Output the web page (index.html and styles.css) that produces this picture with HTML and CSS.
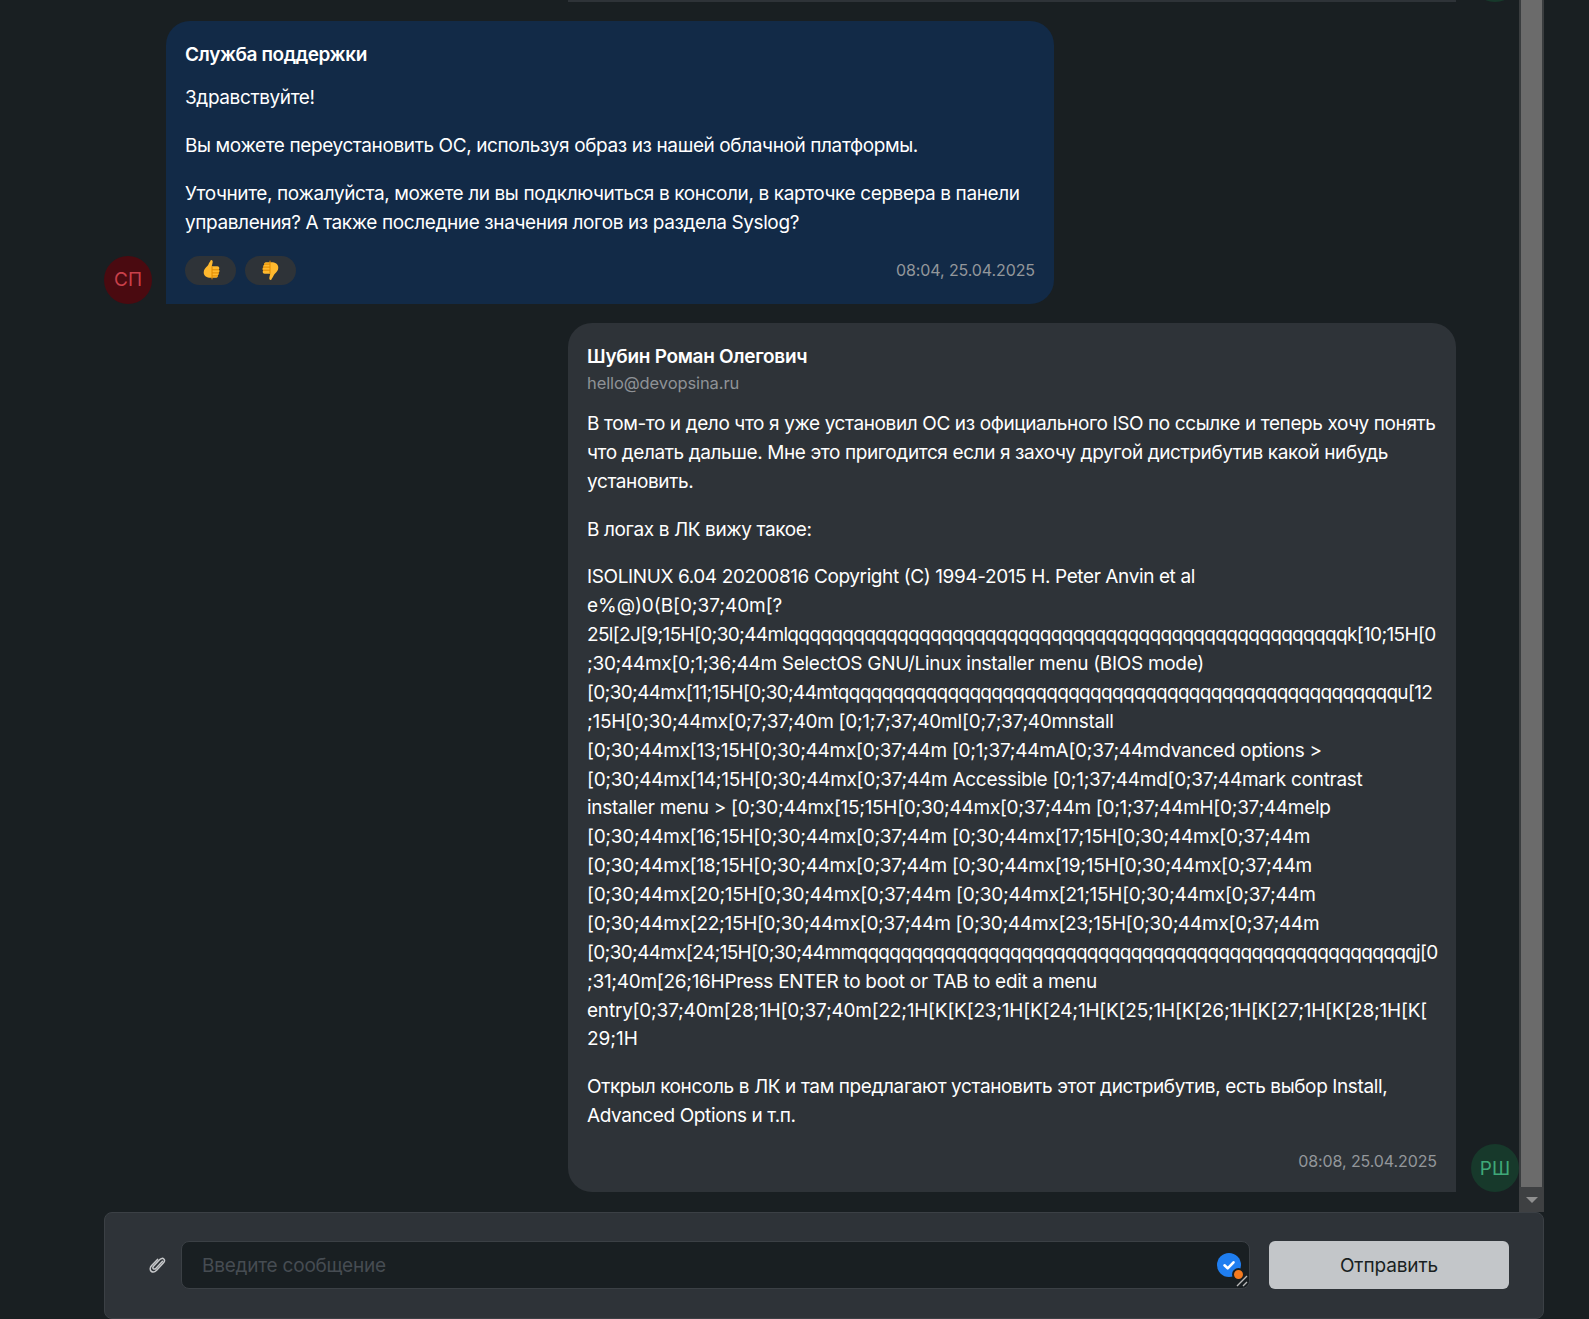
FILE: index.html
```html
<!DOCTYPE html>
<html lang="ru">
<head>
<meta charset="utf-8">
<title>Чат поддержки</title>
<link rel="stylesheet" href="styles.css">
</head>
<body>
<div class="page">
  <div class="chat">
    <div class="messages">
      <div class="prev-stub">
        <div class="prev-bubble"></div>
        <div class="avatar avatar-user"></div>
      </div>
      <div class="msg msg-in">
        <div class="avatar avatar-support">СП</div>
        <div class="bubble bubble-in">
          <div class="author">Служба поддержки</div>
          <p>Здравствуйте!</p>
          <p>Вы можете переустановить ОС, используя образ из нашей облачной платформы.</p>
          <p>Уточните, пожалуйста, можете ли вы подключиться в консоли, в карточке сервера в панели<br>управления? А также последние значения логов из раздела Syslog?</p>
          <div class="foot">
            <div class="reactions">
              <button class="react" type="button" aria-label="Нравится">
                <svg class="thumb" viewBox="0 0 20 22"><path fill="#ffb92e" d="M9.600 1.200c1.300-.6 2.200.4 2.100 1.800-.1 1.600-.7 3-1 4.300h5.600c1.300 0 2 .9 2 2 0 .6-.2 1-.5 1.300.5.400.7 1 .7 1.500 0 .8-.4 1.300-.9 1.600.2.400.3.800.2 1.200-.1.600-.5 1-1 1.300.2.400.2.800.1 1.100-.3 1-1.200 1.500-2.200 1.500H9.500c-3.500 0-6.800-1.500-6.800-5.500 0-3 2-4.500 3.700-6.300 1.300-1.400 1.500-3.300 3.200-5.300z"/><path fill="none" stroke="#e08a00" stroke-width="1" d="M11 7.500v12.800M11 10.800h7M11 13.900h7M11 16.900h6"/></svg>
              </button>
              <button class="react" type="button" aria-label="Не нравится">
                <svg class="thumb" viewBox="0 0 20 22"><g transform="rotate(180 10 11)"><path fill="#ffb92e" d="M9.600 1.200c1.300-.6 2.200.4 2.100 1.800-.1 1.600-.7 3-1 4.300h5.600c1.300 0 2 .9 2 2 0 .6-.2 1-.5 1.300.5.400.7 1 .7 1.500 0 .8-.4 1.300-.9 1.600.2.400.3.800.2 1.200-.1.600-.5 1-1 1.300.2.400.2.800.1 1.100-.3 1-1.200 1.500-2.200 1.500H9.500c-3.500 0-6.800-1.500-6.800-5.500 0-3 2-4.500 3.700-6.300 1.300-1.400 1.500-3.300 3.200-5.300z"/><path fill="none" stroke="#e08a00" stroke-width="1" d="M11 7.500v12.800M11 10.800h7M11 13.900h7M11 16.900h6"/></g></svg>
              </button>
            </div>
            <span class="time">08:04, 25.04.2025</span>
          </div>
        </div>
      </div>
      <div class="msg msg-out">
        <div class="bubble bubble-out">
          <div class="author">Шубин Роман Олегович</div>
          <div class="email">hello@devopsina.ru</div>
          <p>В том-то и дело что я уже установил ОС из официального ISO по ссылке и теперь хочу понять<br>что делать дальше. Мне это пригодится если я захочу другой дистрибутив какой нибудь<br>установить.</p>
          <p>В логах в ЛК вижу такое:</p>
          <p>ISOLINUX 6.04 20200816 Copyright (C) 1994-2015 H. Peter Anvin et al<br><span class="loose">e%@)0(B[0;37;40m[?</span><br><span class="qline">25l[2J[9;15H[0;30;44mlqqqqqqqqqqqqqqqqqqqqqqqqqqqqqqqqqqqqqqqqqqqqqqqqqqqk[10;15H[0</span><br><span class="code">;30;44mx[0;1;36;44m SelectOS GNU/Linux installer menu (BIOS mode)</span><br><span class="qline">[0;30;44mx[11;15H[0;30;44mtqqqqqqqqqqqqqqqqqqqqqqqqqqqqqqqqqqqqqqqqqqqqqqqqqqqu[12</span><br><span class="code">;15H[0;30;44mx[0;7;37;40m [0;1;7;37;40mI[0;7;37;40mnstall</span><br><span class="code">[0;30;44mx[13;15H[0;30;44mx[0;37;44m [0;1;37;44mA[0;37;44mdvanced options &gt;</span><br><span class="code">[0;30;44mx[14;15H[0;30;44mx[0;37;44m Accessible [0;1;37;44md[0;37;44mark contrast</span><br><span class="code">installer menu &gt; [0;30;44mx[15;15H[0;30;44mx[0;37;44m [0;1;37;44mH[0;37;44melp</span><br><span class="code">[0;30;44mx[16;15H[0;30;44mx[0;37;44m [0;30;44mx[17;15H[0;30;44mx[0;37;44m</span><br><span class="code">[0;30;44mx[18;15H[0;30;44mx[0;37;44m [0;30;44mx[19;15H[0;30;44mx[0;37;44m</span><br><span class="code">[0;30;44mx[20;15H[0;30;44mx[0;37;44m [0;30;44mx[21;15H[0;30;44mx[0;37;44m</span><br><span class="code">[0;30;44mx[22;15H[0;30;44mx[0;37;44m [0;30;44mx[23;15H[0;30;44mx[0;37;44m</span><br><span class="qline">[0;30;44mx[24;15H[0;30;44mmqqqqqqqqqqqqqqqqqqqqqqqqqqqqqqqqqqqqqqqqqqqqqqqqqqqj[0</span><br><span class="code">;31;40m[26;16HPress ENTER to boot or TAB to edit a menu</span><br><span class="entry">entry[0;37;40m[28;1H[0;37;40m[22;1H[K[K[23;1H[K[24;1H[K[25;1H[K[26;1H[K[27;1H[K[28;1H[K[</span><br><span class="loose">29;1H</span></p>
          <p>Открыл консоль в ЛК и там предлагают установить этот дистрибутив, есть выбор Install,<br>Advanced Options и т.п.</p>
          <div class="foot foot-end"><span class="time">08:08, 25.04.2025</span></div>
        </div>
        <div class="avatar avatar-user">РШ</div>
      </div>
    </div>
    <div class="scrollbar">
      <div class="scroll-thumb"></div>
      <div class="scroll-end"><span class="scroll-arrow"></span></div>
    </div>
  </div>
  <div class="composer">
    <svg class="clip" viewBox="0 0 18 18" aria-hidden="true"><path fill="none" stroke="#c6c8ca" stroke-width="1.500" stroke-linecap="round" d="M14.500 5.200 7.800 12.400c-.8.900-1.900.9-2.500.3-.6-.6-.5-1.600.2-2.400l6.300-6.700c1.300-1.400 3-1.600 4-.6 1 1 .8 2.700-.5 4.100l-6.700 7.100c-1.800 1.900-4.100 2.200-5.500.9-1.400-1.300-1.100-3.700.6-5.500l5.800-6.200"/></svg>
    <div class="input">
      <span class="placeholder">Введите сообщение</span>
      <span class="check">
        <svg viewBox="0 0 24 24" aria-hidden="true"><circle cx="12" cy="12" r="12" fill="#1f7ef0"/><path fill="none" stroke="#fff" stroke-width="2.600" stroke-linecap="round" stroke-linejoin="round" d="M7.500 12.300l3.200 3 5.800-6"/></svg>
        <span class="check-dot"></span>
      </span>
      <svg class="grip" viewBox="0 0 12 12" aria-hidden="true"><path stroke="#b8b8b8" stroke-width="1.400" d="M1 11 11 1M7 11l4-4"/></svg>
    </div>
    <button class="send" type="button">Отправить</button>
  </div>
</div>
</body>
</html>
```
FILE: styles.css
```css
* { box-sizing: border-box; }
html, body { margin: 0; height: 100%; overflow: hidden; background: #191f22; }
body { font-family: Inter, "Liberation Sans", sans-serif; color: #fff; }
.page { height: 1319px; display: flex; flex-direction: column; padding-left: 104px; padding-right: 45px; }
.chat { height: 1212px; flex: none; display: flex; overflow: hidden; }
.messages { flex: 1; display: flex; flex-direction: column; justify-content: flex-end; gap: 19px; padding-bottom: 20px; min-width: 0; overflow: hidden; }
.prev-stub { flex: none; display: flex; justify-content: flex-end; align-items: flex-end; gap: 15px; height: 2px; overflow: hidden; }
.prev-bubble { flex: none; width: 888px; height: 2px; background: #2e3338; }
.msg { flex: none; display: flex; align-items: flex-end; }
.msg-in { justify-content: flex-start; gap: 14px; }
.msg-out { justify-content: flex-end; gap: 15px; }
.avatar { flex: none; width: 48px; height: 48px; border-radius: 50%; display: flex; align-items: center; justify-content: center; font-size: 19px; }
.avatar-support { background: #4a0a10; color: #c9404a; }
.avatar-user { background: #17392b; color: #3fa878; }
.bubble { width: 888px; padding: 20px 19px 19px; font-size: 19px; line-height: 28.880px; letter-spacing: -0.39px; color: #fff; }
.bubble-in { background: #122a47; border-radius: 24px 24px 24px 0; padding-bottom: 19px; }
.bubble-out { background: #2e3338; border-radius: 24px 24px 0 24px; }
.author { font-weight: 600; font-size: 19px; line-height: 27px; letter-spacing: -0.3px; }
.bubble-in .author { letter-spacing: -0.42px; }
.email { font-size: 16.500px; line-height: 27px; letter-spacing: -0.1px; color: #8e9296; }
.bubble p { margin: 0; padding-top: 19px; }
.bubble .author + p { padding-top: 16px; }
.bubble .email + p { padding-top: 13px; }
.code { letter-spacing: -0.29px; }
.qline { letter-spacing: -0.66px; }
.entry { letter-spacing: -0.21px; }
.loose { letter-spacing: -0.05px; }
.foot { display: flex; align-items: center; justify-content: space-between; margin-top: 18px; }
.foot-end { justify-content: flex-end; margin-top: 18px; }
.reactions { display: flex; gap: 9px; }
.react { width: 51px; height: 29px; border: 0; padding: 0; border-radius: 15px; background: #2e3338; display: flex; align-items: center; justify-content: center; }
.thumb { width: 20px; height: 22px; }
.time { font-size: 16px; line-height: 24px; letter-spacing: -0.1px; color: #93979b; }
.scrollbar { flex: none; width: 25px; background: #3a3d3f; padding: 0 2px; display: flex; flex-direction: column; }
.scroll-thumb { flex: 1; background: #6b6b6b; }
.scroll-end { height: 25px; display: flex; align-items: center; justify-content: center; margin: 0 -2px; background: #3e4042; }
.scroll-arrow { width: 0; height: 0; border-left: 6px solid transparent; border-right: 6px solid transparent; border-top: 6px solid #8f8f8f; }
.composer { height: 107px; flex: none; display: flex; align-items: flex-start; padding: 28px 34px 0 43px; background: #2e3338; border: 1px solid #3b4045; border-radius: 8px; }
.clip { width: 18px; height: 18px; margin-top: 15px; margin-right: 15px; flex: none; }
.input { position: relative; width: 1069px; height: 48px; background: #191f22; border: 1px solid #3b4045; border-radius: 8px; display: flex; align-items: center; padding-left: 20px; flex: none; }
.placeholder { font-size: 19px; letter-spacing: -0.22px; color: #464c52; }
.check { position: absolute; right: 8px; top: 11px; width: 24px; height: 24px; }
.check svg { display: block; width: 24px; height: 24px; }
.check-dot { position: absolute; right: -4px; bottom: -4px; width: 13px; height: 13px; background: #f47a1f; border: 2px solid #191f22; border-radius: 50%; }
.grip { position: absolute; right: 1px; bottom: 1px; width: 12px; height: 12px; }
.send { width: 240px; height: 48px; margin-left: 19px; border: 0; border-radius: 6px; background: #c3c6c9; color: #191f22; font-family: inherit; font-size: 19px; letter-spacing: -0.1px; flex: none; }
```
